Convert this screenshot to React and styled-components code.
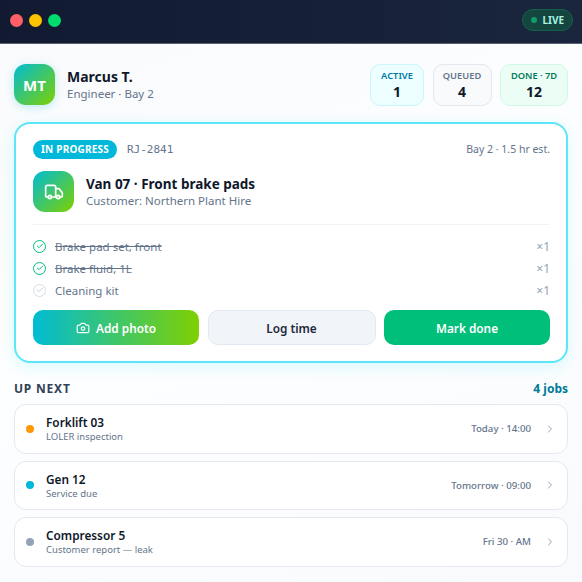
import React from 'react';
import styled, { createGlobalStyle } from 'styled-components';
import { Camera, Check, ChevronRight, Truck } from 'lucide-react';

const GlobalStyle = createGlobalStyle`
  html, body {
    margin: 0;
    padding: 0;
    height: 100%;
  }
  body {
    font-family: "Noto Sans", sans-serif;
    overflow: hidden;
  }
`;

const Page = styled.div`
  width: 582px;
  height: 582px;
  background: linear-gradient(160deg, #f8fafc 0%, #fdfeff 50%, #f8fafc 100%);
`;

const TitleBar = styled.header`
  height: 40px;
  box-sizing: content-box;
  display: flex;
  align-items: center;
  justify-content: space-between;
  padding: 0 9px 3px 10px;
  background: linear-gradient(90deg, #111a30, #1a263d);
  border-bottom: 1px solid #5b6170;
`;

const Lights = styled.div`
  display: flex;
  gap: 6px;
`;

const Light = styled.span`
  width: 13px;
  height: 13px;
  border-radius: 50%;
  background: ${p => p.$color};
`;

const LivePill = styled.div`
  display: flex;
  align-items: center;
  gap: 5px;
  height: 22px;
  box-sizing: border-box;
  padding: 0 8px;
  border-radius: 11px;
  background: #14463f;
  border: 1px solid #16604f;
  color: #a7f3e0;
  font-size: 10px;
  font-weight: 700;
`;

const LiveDot = styled.span`
  width: 6px;
  height: 6px;
  border-radius: 50%;
  background: #0f9d6b;
`;

const Content = styled.main`
  padding: 20px 14px 0;
`;

const TopRow = styled.section`
  display: flex;
  align-items: center;
  justify-content: space-between;
  height: 41px;
`;

const Person = styled.div`
  display: flex;
  align-items: center;
  gap: 12px;
`;

const Avatar = styled.div`
  width: 41px;
  height: 41px;
  border-radius: 12px;
  display: flex;
  align-items: center;
  justify-content: center;
  background: linear-gradient(135deg, #00bcd4, #7ed000);
  box-shadow: 0 2px 8px rgba(0, 188, 212, 0.25);
  color: #fff;
  font-size: 15px;
  font-weight: 700;
`;

const PersonName = styled.div`
  font-size: 14px;
  font-weight: 700;
  line-height: 19px;
  color: #0f172a;
`;

const PersonRole = styled.div`
  font-size: 11.5px;
  line-height: 16px;
  color: #64748b;
`;

const Stats = styled.div`
  display: flex;
  gap: 8.5px;
`;

const Stat = styled.div`
  box-sizing: border-box;
  width: ${p => p.$width}px;
  height: 42px;
  border-radius: 10px;
  border: 1px solid ${p => p.$border};
  background: ${p => p.$bg};
  display: flex;
  flex-direction: column;
  align-items: center;
  justify-content: center;
`;

const StatLabel = styled.div`
  font-size: 9.3px;
  font-weight: 600;
  line-height: 14px;
  color: ${p => p.$color};
`;

const StatValue = styled.div`
  font-size: 14px;
  font-weight: 700;
  line-height: 18px;
  color: #0f172a;
`;

const JobCard = styled.section`
  box-sizing: border-box;
  margin-top: 17px;
  height: 241px;
  padding: 15px 16px 0 17px;
  border: 2px solid #5ce6f7;
  border-radius: 16px;
  background: #fff;
  box-shadow: 0 4px 16px rgba(0, 229, 255, 0.14);
`;

const JobMeta = styled.div`
  display: flex;
  align-items: center;
  justify-content: space-between;
  height: 20px;
`;

const MetaLeft = styled.div`
  display: flex;
  align-items: center;
  gap: 10px;
`;

const StatusBadge = styled.span`
  height: 19px;
  padding: 0 8px;
  border-radius: 10px;
  background: #00b8d9;
  color: #fff;
  font-size: 10px;
  font-weight: 700;
  letter-spacing: 0.2px;
  line-height: 19px;
`;

const JobRef = styled.span`
  font-family: "DejaVu Sans Mono", monospace;
  font-size: 11px;
  color: #64748b;
`;

const MetaRight = styled.span`
  font-size: 10.5px;
  color: #64748b;
`;

const JobHead = styled.div`
  display: flex;
  align-items: center;
  gap: 12px;
  margin-top: 12px;
  padding-bottom: 12px;
  border-bottom: 1px solid #f1f3f6;
`;

const JobIcon = styled.div`
  width: 41px;
  height: 41px;
  border-radius: 12px;
  display: flex;
  align-items: center;
  justify-content: center;
  background: linear-gradient(135deg, #00bcd4, #7ed000);
  color: #fff;
`;

const JobTitle = styled.div`
  font-size: 13.5px;
  font-weight: 700;
  line-height: 18px;
  color: #0f172a;
`;

const JobCustomer = styled.div`
  font-size: 11.5px;
  line-height: 16px;
  color: #64748b;
`;

const Parts = styled.ul`
  list-style: none;
  margin: 10px 0 0;
  padding: 0;
`;

const Part = styled.li`
  display: flex;
  align-items: center;
  gap: 9px;
  height: 22px;
`;

const PartCheck = styled.span`
  box-sizing: border-box;
  width: 13px;
  height: 13px;
  border-radius: 50%;
  display: flex;
  align-items: center;
  justify-content: center;
  border: 1.5px solid ${p => (p.$done ? '#00bf7a' : '#d8dde5')};
  color: ${p => (p.$done ? '#00bf7a' : '#c5ccd6')};
`;

const PartName = styled.span`
  flex: 1;
  font-size: 11.5px;
  color: #64748b;
  text-decoration: ${p => (p.$done ? 'line-through' : 'none')};
`;

const PartQty = styled.span`
  font-size: 12px;
  color: #94a3b8;
`;

const Actions = styled.div`
  display: grid;
  grid-template-columns: 166px 168px 1fr;
  gap: 8.5px;
  margin-top: 9px;
`;

const Action = styled.button`
  box-sizing: border-box;
  height: 35px;
  border-radius: 10px;
  display: flex;
  align-items: center;
  justify-content: center;
  gap: 6px;
  font-family: inherit;
  font-size: 11.8px;
  font-weight: 600;
  color: ${p => (p.$variant === 'plain' ? '#1e293b' : '#fff')};
  border: ${p => (p.$variant === 'plain' ? '1px solid #e2e8f0' : 'none')};
  background: ${p =>
    p.$variant === 'plain'
      ? '#f1f5f9'
      : p.$variant === 'done'
        ? '#00bf7a'
        : 'linear-gradient(90deg, #00bcd4, #7ed000)'};
`;

const NextHead = styled.div`
  display: flex;
  align-items: center;
  justify-content: space-between;
  margin-top: 16px;
  height: 18px;
`;

const NextTitle = styled.div`
  font-size: 12px;
  font-weight: 700;
  letter-spacing: 0.8px;
  color: #334155;
`;

const NextCount = styled.div`
  font-size: 12px;
  font-weight: 700;
  color: #007a99;
`;

const NextList = styled.div`
  display: flex;
  flex-direction: column;
  gap: 7px;
  margin-top: 7px;
`;

const NextRow = styled.div`
  box-sizing: border-box;
  height: 49.5px;
  padding: 0 11px;
  display: flex;
  align-items: center;
  gap: 12px;
  background: #fff;
  border: 1px solid #e5e8ee;
  border-radius: 12px;
`;

const Dot = styled.span`
  width: 8px;
  height: 8px;
  border-radius: 50%;
  background: ${p => p.$color};
`;

const RowText = styled.div`
  flex: 1;
`;

const RowTitle = styled.div`
  font-size: 11.8px;
  font-weight: 600;
  line-height: 16px;
  color: #0f172a;
`;

const RowSub = styled.div`
  font-size: 9.5px;
  line-height: 13px;
  color: #64748b;
`;

const RowWhen = styled.div`
  font-size: 9.7px;
  font-weight: 500;
  color: #64748b;
  margin-right: 1px;
`;

const Chevron = styled(ChevronRight)`
  color: #94a3b8;
`;

const stats = [
  { label: 'ACTIVE', value: '1', width: 54, color: '#0079a3', bg: '#ecfeff', border: '#cbf6fb' },
  { label: 'QUEUED', value: '4', width: 59, color: '#64748b', bg: '#f8fafc', border: '#e2e8f0' },
  { label: 'DONE · 7D', value: '12', width: 68, color: '#007a5a', bg: '#ecfdf5', border: '#d1fae5' },
];

const parts = [
  { name: 'Brake pad set, front', done: true },
  { name: 'Brake fluid, 1L', done: true },
  { name: 'Cleaning kit', done: false },
];

const jobs = [
  { title: 'Forklift 03', sub: 'LOLER inspection', when: 'Today · 14:00', color: '#ff9800' },
  { title: 'Gen 12', sub: 'Service due', when: 'Tomorrow · 09:00', color: '#00b8d9' },
  { title: 'Compressor 5', sub: 'Customer report — leak', when: 'Fri 30 · AM', color: '#94a3b8' },
];

const App = () => (
  <Page>
    <GlobalStyle />
    <TitleBar>
      <Lights>
        <Light $color="#ff5f66" />
        <Light $color="#ffc400" />
        <Light $color="#00dc6e" />
      </Lights>
      <LivePill>
        <LiveDot />
        LIVE
      </LivePill>
    </TitleBar>
    <Content>
      <TopRow>
        <Person>
          <Avatar>MT</Avatar>
          <div>
            <PersonName>Marcus T.</PersonName>
            <PersonRole>Engineer · Bay 2</PersonRole>
          </div>
        </Person>
        <Stats>
          {stats.map(s => (
            <Stat key={s.label} $width={s.width} $bg={s.bg} $border={s.border}>
              <StatLabel $color={s.color}>{s.label}</StatLabel>
              <StatValue>{s.value}</StatValue>
            </Stat>
          ))}
        </Stats>
      </TopRow>

      <JobCard>
        <JobMeta>
          <MetaLeft>
            <StatusBadge>IN PROGRESS</StatusBadge>
            <JobRef>RJ-2841</JobRef>
          </MetaLeft>
          <MetaRight>Bay 2 · 1.5 hr est.</MetaRight>
        </JobMeta>
        <JobHead>
          <JobIcon>
            <Truck size={20} strokeWidth={2} />
          </JobIcon>
          <div>
            <JobTitle>Van 07 · Front brake pads</JobTitle>
            <JobCustomer>Customer: Northern Plant Hire</JobCustomer>
          </div>
        </JobHead>
        <Parts>
          {parts.map(p => (
            <Part key={p.name}>
              <PartCheck $done={p.done}>
                <Check size={8} strokeWidth={3} />
              </PartCheck>
              <PartName $done={p.done}>{p.name}</PartName>
              <PartQty>×1</PartQty>
            </Part>
          ))}
        </Parts>
        <Actions>
          <Action>
            <Camera size={14} />
            Add photo
          </Action>
          <Action $variant="plain">Log time</Action>
          <Action $variant="done">Mark done</Action>
        </Actions>
      </JobCard>

      <NextHead>
        <NextTitle>UP NEXT</NextTitle>
        <NextCount>4 jobs</NextCount>
      </NextHead>
      <NextList>
        {jobs.map(j => (
          <NextRow key={j.title}>
            <Dot $color={j.color} />
            <RowText>
              <RowTitle>{j.title}</RowTitle>
              <RowSub>{j.sub}</RowSub>
            </RowText>
            <RowWhen>{j.when}</RowWhen>
            <Chevron size={12} />
          </NextRow>
        ))}
      </NextList>
    </Content>
  </Page>
);

export default App;
